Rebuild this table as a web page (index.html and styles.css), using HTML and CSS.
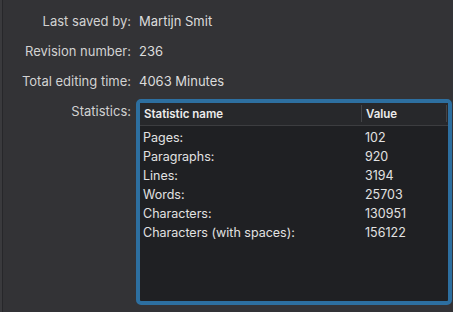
FILE: index.html
```html
<!DOCTYPE html>
<html lang="en">
<head>
  <meta charset="UTF-8" />
  <meta name="viewport" content="width=device-width, initial-scale=1.0" />
  <title>Document Properties</title>
  <link rel="stylesheet" href="styles.css">
</head>
<body>

  <div id="props">
    <div class="label">Last saved by:</div>
    <div class="value">Martijn Smit</div>

    <div class="label">Revision number:</div>
    <div class="value">236</div>

    <div class="label">Total editing time:</div>
    <div class="value">4063 Minutes</div>

    <div class="label">Statistics:</div>
    <div class="stats-ring">
      <div class="stats">
        <div class="stats-head">
          <div class="col-name">Statistic name</div>
          <div class="col-value">Value</div>
        </div>
        <div class="stats-body">
          <div class="stat-row"><span class="col-name">Pages:</span><span class="col-value">102</span></div>
          <div class="stat-row"><span class="col-name">Paragraphs:</span><span class="col-value">920</span></div>
          <div class="stat-row"><span class="col-name">Lines:</span><span class="col-value">3194</span></div>
          <div class="stat-row"><span class="col-name">Words:</span><span class="col-value">25703</span></div>
          <div class="stat-row"><span class="col-name">Characters:</span><span class="col-value">130951</span></div>
          <div class="stat-row"><span class="col-name">Characters (with spaces):</span><span class="col-value">156122</span></div>
        </div>
      </div>
    </div>
  </div>

</body>
</html>
```

FILE: styles.css
```css
* {
  box-sizing: border-box;
  font-family: Inter, "Liberation Sans", Arial, sans-serif;
}
html, body {
  margin: 0;
  padding: 0;
  overflow: hidden;
  background: #333336;
  color: #dadada;
  height: 100%;
  width: 100%;
}
body {
  border-left: 2px solid #3a3a3d;
}
#props {
  height: 100%;
  border-left: 1px solid #27272a;
  display: grid;
  grid-template-columns: 128px 1fr;
  grid-auto-rows: 30px;
  column-gap: 5px;
  padding-top: 5px;
  font-size: 13px;
}
.label {
  text-align: right;
  line-height: 30px;
  padding-top: 1px;
  color: #d2d2d2;
}
.value {
  line-height: 30px;
  padding-top: 1px;
  padding-left: 3px;
  color: #dcdcdc;
}
.stats-ring {
  margin-top: 4px;
  width: 316px;
  height: 206px;
  border: 4px solid #2d6fa0;
  border-radius: 5px;
  background: #1f2023;
}
.stats {
  height: 100%;
  font-size: 12.5px;
  color: #e2e2e2;
}
.stats-head {
  display: flex;
  height: 23px;
  background: #27282b;
  border-bottom: 1px solid #3c3d40;
  font-size: 11.5px;
  font-weight: 600;
  color: #ececec;
}
.stats-head .col-name {
  width: 222px;
  padding-left: 4px;
  border-right: 1px solid #444548;
  margin: 2px 0 3px;
  line-height: 18px;
}
.stats-head .col-value {
  width: 85px;
  padding-left: 4px;
  border-right: 1px solid #444548;
  margin: 2px 0 3px;
  line-height: 18px;
}
.stats-body {
  padding-top: 2px;
}
.stat-row {
  display: flex;
  height: 19px;
  line-height: 19px;
}
.stat-row .col-name {
  width: 222px;
  padding-left: 3px;
}
.stat-row .col-value {
  padding-left: 3px;
}
```
